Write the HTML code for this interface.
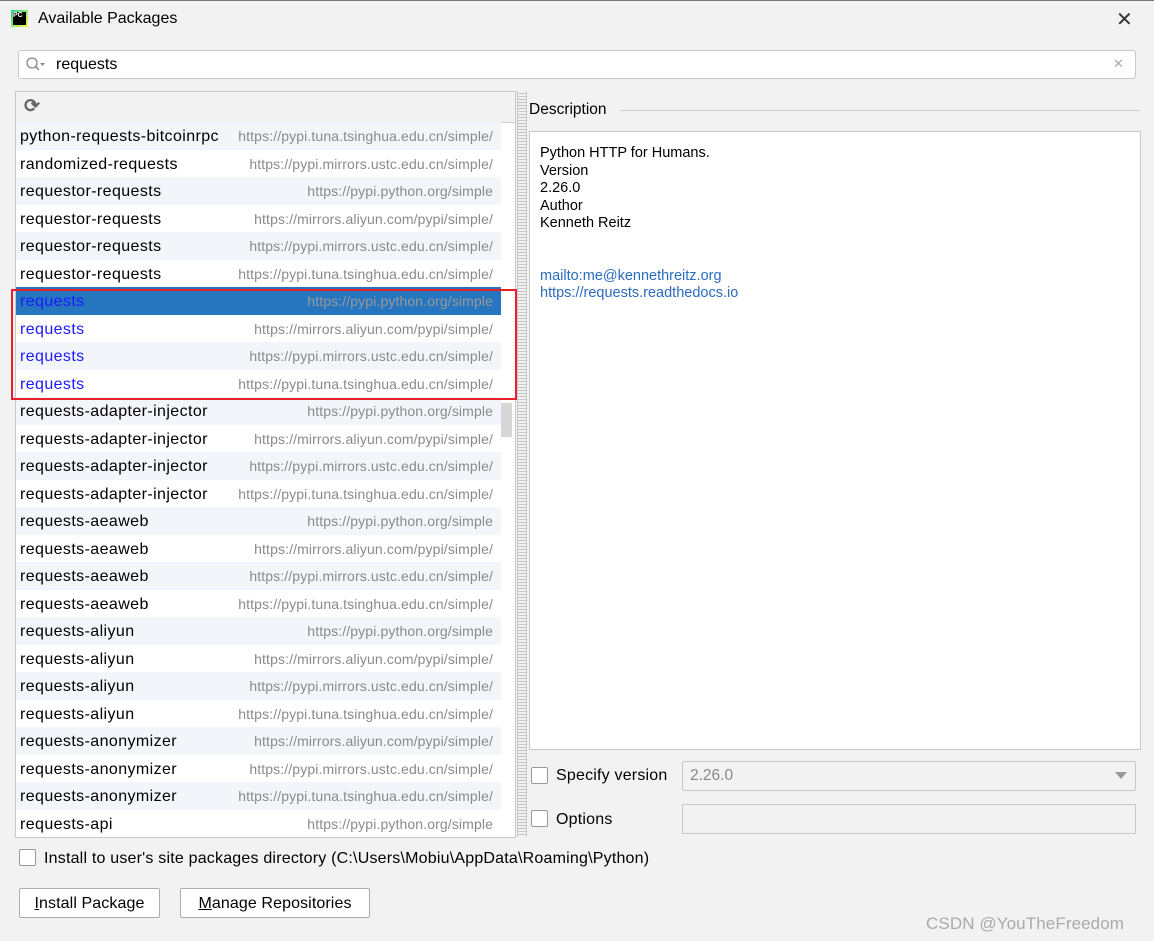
<!DOCTYPE html>
<html><head><style>
body{margin:0;width:1154px;height:941px;background:#f2f2f2;font-family:"Liberation Sans",sans-serif;position:relative;overflow:hidden;color:#000}
.a{position:absolute}
.row{position:absolute;left:0;width:485px;height:27.5px;font-size:16px;line-height:29px;letter-spacing:0.4px}
.row .n{position:absolute;left:4px}
.row .u{position:absolute;right:8px;color:#8a8a8a;font-size:14px;letter-spacing:0.12px}
.cb{position:absolute;width:15px;height:15px;border:1px solid #999;background:#fff;border-radius:2px}
.btn{position:absolute;height:28px;border:1px solid #adadad;background:#fff;font-size:16px;line-height:30px;text-align:center;border-radius:2px;letter-spacing:0.1px}
</style></head><body>
<div class="a" style="left:0;top:0;width:1154px;height:1px;background:#777"></div>
<div class="a" style="left:11px;top:10px;width:17px;height:17px;background:linear-gradient(135deg,#21d789,#fcf84a)"></div>
<div class="a" style="left:13px;top:12px;width:13px;height:13px;background:#000;color:#fff;font-size:7px;line-height:8px;font-weight:bold">PC</div>
<div class="a" style="left:38px;top:10px;font-size:16px">Available Packages</div>
<div class="a" style="left:1116px;top:7px;font-size:20px;color:#333">✕</div>
<div class="a" style="left:18px;top:50px;width:1116px;height:27px;border:1px solid #c8c8c8;background:#fff;border-radius:3px"></div>
<svg class="a" style="left:25px;top:56px" width="24" height="16"><circle cx="7" cy="7" r="5" fill="none" stroke="#888" stroke-width="1.3"/><line x1="10.5" y1="10.5" x2="14" y2="14" stroke="#888" stroke-width="1.5"/><path d="M15 7h5l-2.5 3z" fill="#888"/></svg>
<div class="a" style="left:56px;top:56px;font-size:16px">requests</div>
<div class="a" style="left:1113px;top:56px;font-size:13px;color:#aaa">✕</div>
<div class="a" style="left:15px;top:91px;width:499px;height:745px;border:1px solid #c8c8c8;background:#fff"></div>
<div class="a" style="left:16px;top:92px;width:499px;height:30px;background:#f2f2f2;border-bottom:1px solid #d0d0d0"></div>
<div class="a" style="left:24px;top:95px;font-size:19px;color:#666;font-weight:bold">⟳</div>
<div class="a" style="left:16px;top:122px;width:485px;height:714px;overflow:hidden">
<div class="row" style="top:0;background:#f2f5f9"><span class="n">python-requests-bitcoinrpc</span><span class="u">https://pypi.tuna.tsinghua.edu.cn/simple/</span></div>
<div class="row" style="top:27.5px"><span class="n">randomized-requests</span><span class="u">https://pypi.mirrors.ustc.edu.cn/simple/</span></div>
<div class="row" style="top:55px;background:#f2f5f9"><span class="n">requestor-requests</span><span class="u">https://pypi.python.org/simple</span></div>
<div class="row" style="top:82.5px"><span class="n">requestor-requests</span><span class="u">https://mirrors.aliyun.com/pypi/simple/</span></div>
<div class="row" style="top:110px;background:#f2f5f9"><span class="n">requestor-requests</span><span class="u">https://pypi.mirrors.ustc.edu.cn/simple/</span></div>
<div class="row" style="top:137.5px"><span class="n">requestor-requests</span><span class="u">https://pypi.tuna.tsinghua.edu.cn/simple/</span></div>
<div class="row" style="top:165px;background:#2675bf"><span class="n" style="color:#1a1aff">requests</span><span class="u" style="color:#999">https://pypi.python.org/simple</span></div>
<div class="row" style="top:192.5px"><span class="n" style="color:#1a1aff">requests</span><span class="u">https://mirrors.aliyun.com/pypi/simple/</span></div>
<div class="row" style="top:220px;background:#f2f5f9"><span class="n" style="color:#1a1aff">requests</span><span class="u">https://pypi.mirrors.ustc.edu.cn/simple/</span></div>
<div class="row" style="top:247.5px"><span class="n" style="color:#1a1aff">requests</span><span class="u">https://pypi.tuna.tsinghua.edu.cn/simple/</span></div>
<div class="row" style="top:275px;background:#f2f5f9"><span class="n">requests-adapter-injector</span><span class="u">https://pypi.python.org/simple</span></div>
<div class="row" style="top:302.5px"><span class="n">requests-adapter-injector</span><span class="u">https://mirrors.aliyun.com/pypi/simple/</span></div>
<div class="row" style="top:330px;background:#f2f5f9"><span class="n">requests-adapter-injector</span><span class="u">https://pypi.mirrors.ustc.edu.cn/simple/</span></div>
<div class="row" style="top:357.5px"><span class="n">requests-adapter-injector</span><span class="u">https://pypi.tuna.tsinghua.edu.cn/simple/</span></div>
<div class="row" style="top:385px;background:#f2f5f9"><span class="n">requests-aeaweb</span><span class="u">https://pypi.python.org/simple</span></div>
<div class="row" style="top:412.5px"><span class="n">requests-aeaweb</span><span class="u">https://mirrors.aliyun.com/pypi/simple/</span></div>
<div class="row" style="top:440px;background:#f2f5f9"><span class="n">requests-aeaweb</span><span class="u">https://pypi.mirrors.ustc.edu.cn/simple/</span></div>
<div class="row" style="top:467.5px"><span class="n">requests-aeaweb</span><span class="u">https://pypi.tuna.tsinghua.edu.cn/simple/</span></div>
<div class="row" style="top:495px;background:#f2f5f9"><span class="n">requests-aliyun</span><span class="u">https://pypi.python.org/simple</span></div>
<div class="row" style="top:522.5px"><span class="n">requests-aliyun</span><span class="u">https://mirrors.aliyun.com/pypi/simple/</span></div>
<div class="row" style="top:550px;background:#f2f5f9"><span class="n">requests-aliyun</span><span class="u">https://pypi.mirrors.ustc.edu.cn/simple/</span></div>
<div class="row" style="top:577.5px"><span class="n">requests-aliyun</span><span class="u">https://pypi.tuna.tsinghua.edu.cn/simple/</span></div>
<div class="row" style="top:605px;background:#f2f5f9"><span class="n">requests-anonymizer</span><span class="u">https://mirrors.aliyun.com/pypi/simple/</span></div>
<div class="row" style="top:632.5px"><span class="n">requests-anonymizer</span><span class="u">https://pypi.mirrors.ustc.edu.cn/simple/</span></div>
<div class="row" style="top:660px;background:#f2f5f9"><span class="n">requests-anonymizer</span><span class="u">https://pypi.tuna.tsinghua.edu.cn/simple/</span></div>
<div class="row" style="top:687.5px"><span class="n">requests-api</span><span class="u">https://pypi.python.org/simple</span></div>
</div>
<div class="a" style="left:501px;top:403px;width:11px;height:34px;background:#d6d6d6"></div>
<div class="a" style="left:11px;top:289px;width:502px;height:107px;border:2px solid #e8202a"></div>
<div class="a" style="left:517px;top:91px;width:8px;height:746px;border-left:1px solid #c8c8c8;border-right:1px solid #c8c8c8;background:repeating-linear-gradient(#f2f2f2 0 2px,#c4c4c4 2px 3px)"></div>
<div class="a" style="left:529px;top:101px;font-size:15.5px">Description</div>
<div class="a" style="left:620px;top:110px;width:520px;height:1px;background:#d0d0d0"></div>
<div class="a" style="left:529px;top:131px;width:610px;height:617px;border:1px solid #c8c8c8;background:#fff"></div>
<div class="a" style="left:540px;top:145px;font-size:14.5px;line-height:17.5px">Python HTTP for Humans.<br>Version<br>2.26.0<br>Author<br>Kenneth Reitz<br><br><br><span style="color:#2a6cc0">mailto:me@kennethreitz.org<br>https://requests.readthedocs.io</span></div>
<div class="cb" style="left:531px;top:767px"></div>
<div class="a" style="left:556px;top:767px;font-size:16px;letter-spacing:0.2px">Specify version</div>
<div class="a" style="left:682px;top:761px;width:452px;height:28px;border:1px solid #c8c8c8;background:#f2f2f2;border-radius:2px"></div>
<div class="a" style="left:690px;top:767px;font-size:15.5px;color:#888">2.26.0</div>
<div class="a" style="left:1115px;top:772px;width:0;height:0;border-left:6px solid transparent;border-right:6px solid transparent;border-top:7px solid #999"></div>
<div class="cb" style="left:531px;top:810px"></div>
<div class="a" style="left:556px;top:811px;font-size:16px;letter-spacing:0.2px">Options</div>
<div class="a" style="left:682px;top:804px;width:452px;height:28px;border:1px solid #c8c8c8;background:#f2f2f2"></div>
<div class="cb" style="left:19px;top:849px"></div>
<div class="a" style="left:44px;top:850px;font-size:16px;letter-spacing:0.2px">Install to user's site packages directory (C:\Users\Mobiu\AppData\Roaming\Python)</div>
<div class="btn" style="left:19px;top:888px;width:139px"><u>I</u>nstall Package</div>
<div class="btn" style="left:180px;top:888px;width:188px"><u>M</u>anage Repositories</div>
<div class="a" style="left:926px;top:914px;font-size:17px;color:#aaa;letter-spacing:0.1px">CSDN @YouTheFreedom</div>
</body></html>
